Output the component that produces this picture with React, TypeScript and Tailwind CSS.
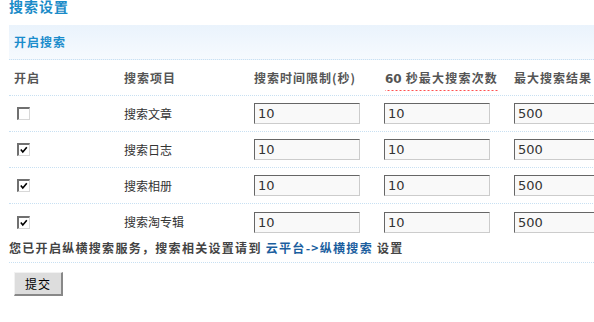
import React from "react";

const rows = [
  { name: "搜索文章", checked: false },
  { name: "搜索日志", checked: true },
  { name: "搜索相册", checked: true },
  { name: "搜索淘专辑", checked: true },
];

function Check({ checked }: { checked: boolean }) {
  return (
    <span className="ml-[4px] block w-[13px] h-[13px] border-t-[2px] border-l-[2px] border-t-[#707070] border-l-[#707070] border-b border-r border-b-[#d8d8d8] border-r-[#d8d8d8] bg-white relative">
      {checked && (
        <svg viewBox="0 0 10 10" className="absolute left-[1px] top-[1px] w-[8px] h-[8px]">
          <path d="M1 4.5 L3.5 7.5 L8.5 1.5" stroke="#000" strokeWidth="2" fill="none" />
        </svg>
      )}
    </span>
  );
}

function Field({ value }: { value: string }) {
  return (
    <div className="w-[106px] h-[21px] bg-[#f9f9f9] border-t border-l border-t-[#666] border-l-[#666] border-b border-r border-b-[#cccccc] border-r-[#cccccc] pl-[3px] flex items-center font-['DejaVu_Sans',sans-serif] text-[13px] leading-[13px] text-[#333]">
      {value}
    </div>
  );
}

export default function App() {
  return (
    <div className="w-[594px] h-[322px] overflow-hidden bg-white font-['Noto_Sans_CJK_SC',sans-serif]">
      <div className="pl-[9px]">
        <h1 className="-mt-[1px] text-[14px] leading-[14px] font-bold tracking-[1px] text-[#1a8bc8]">搜索设置</h1>
        <div className="mt-[12px] h-[35px] flex items-center pl-[5px] bg-gradient-to-b from-[#eaf3fc] to-[#f6fafe] border-b border-dotted border-[#c8e0f2] text-[12px] font-bold tracking-[1px] text-[#1b8dcc]">
          开启搜索
        </div>
        <div className="w-[640px] grid grid-cols-[110px_130px_130px_130px_140px] h-[36px] items-center border-b border-dotted border-[#c8e0f2] text-[12px] font-bold tracking-[1px] text-[#555]">
          <div className="pl-[5px]">开启</div>
          <div className="pl-[5px]">搜索项目</div>
          <div className="pl-[5px]">搜索时间限制(秒)</div>
          <div className="pl-[6px] pt-[4px]">
            <span className="inline-block pb-[4px] leading-[15px] tracking-[1.2px] bg-[linear-gradient(to_right,#ff5050_50%,transparent_50%)] bg-[length:4px_1px] bg-repeat-x bg-bottom">
              <span className="font-['DejaVu_Sans',sans-serif] tracking-normal text-[12px]">60</span> 秒最大搜索次数
            </span>
          </div>
          <div className="pl-[5px]">最大搜索结果</div>
        </div>
        {rows.map((r, i) => (
          <div
            key={r.name}
            className={
              i < rows.length - 1
                ? "w-[640px] grid grid-cols-[110px_130px_130px_130px_140px] h-[36px] items-center border-b border-dotted border-[#c8e0f2] text-[12px] text-[#333]"
                : "w-[640px] grid grid-cols-[110px_130px_130px_130px_140px] h-[36px] items-center text-[12px] text-[#333]"
            }
          >
            <div className="pl-[4px]">
              <Check checked={r.checked} />
            </div>
            <div className="pl-[5px]">{r.name}</div>
            <div className="pl-[5px]">
              <Field value="10" />
            </div>
            <div className="pl-[5px]">
              <Field value="10" />
            </div>
            <div className="pl-[5px]">
              <Field value="500" />
            </div>
          </div>
        ))}
        <div className="h-[23px] pb-[8px] border-b border-dotted border-[#c8e0f2] text-[12px] leading-[15px] font-bold tracking-[1.3px] text-[#444] whitespace-nowrap">
          您已开启纵横搜索服务，搜索相关设置请到 <a className="text-[#1b5e9e]">云平台-&gt;纵横搜索</a> 设置
        </div>
        <button className="mt-[9px] ml-[5px] w-[49px] h-[24px] bg-[#dddddd] border-t border-l border-t-[#f2f2f2] border-l-[#f2f2f2] border-b-2 border-r-2 border-b-[#888] border-r-[#888] text-[12px] leading-[12px] text-black tracking-[1px]">
          提交
        </button>
      </div>
    </div>
  );
}
